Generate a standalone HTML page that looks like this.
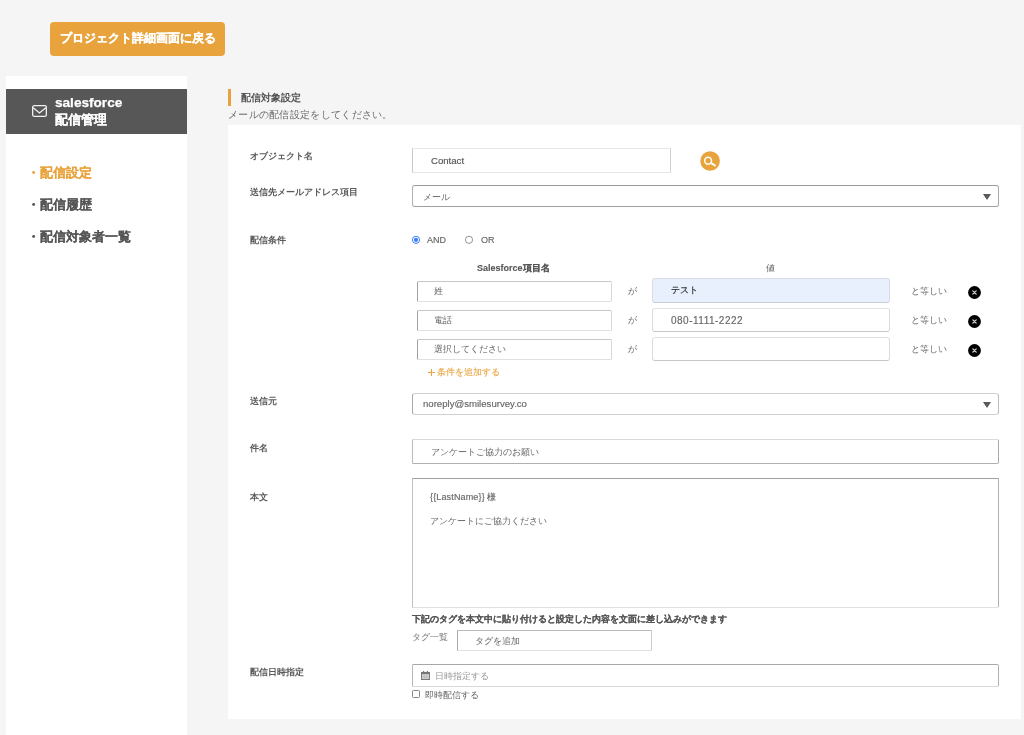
<!DOCTYPE html>
<html><head><meta charset="utf-8">
<style>
*{box-sizing:border-box;margin:0;padding:0}
html,body{width:1024px;height:735px;overflow:hidden;background:#f5f5f5;font-family:"Liberation Sans",sans-serif;color:#555;position:relative}
.a{position:absolute;white-space:nowrap;will-change:transform}
.btn{left:50px;top:22px;width:175px;height:34px;background:#e9a33c;border-radius:4px;color:#fff;font-weight:bold;font-size:12px;line-height:32px;text-align:center}
.side{left:6px;top:76px;width:181px;height:659px;background:#fff}
.shead{left:6px;top:89px;width:181px;height:45px;background:#575757}
.stitle{left:55px;top:95px;color:#fff;font-weight:bold;font-size:13.6px;line-height:16px}
.stitle2{left:55px;top:112px;color:#fff;font-weight:bold;font-size:13px;line-height:16px}
.nav{left:27px;font-size:12.6px;font-weight:bold;color:#555;line-height:16px;-webkit-text-stroke:0.1px currentColor}
.nav.on{color:#e9a33c}
.bar{left:228px;top:89px;width:3px;height:17px;background:#e9a33c}
.h1{left:241px;top:91px;font-size:10px;font-weight:bold;color:#555;line-height:14px}
.sub{left:228px;top:108px;font-size:10px;letter-spacing:0.3px;color:#6a6a6a;line-height:14px}
.panel{left:228px;top:125px;width:793px;height:594px;background:#fff}
.lbl{left:250px;font-size:9px;font-weight:bold;color:#5a5a5a;line-height:12px}
.inp{border:1px solid #ddd;border-top-color:#c8c8c8;border-radius:2px;background:#fff;font-size:9px;color:#666}
.sel{border:1px solid #a9a9a9;border-top-color:#999;border-radius:3px;background:#fff;font-size:9px;color:#555}
.txt{font-size:9px;color:#666;line-height:12px}
.tri{width:0;height:0;border-left:4px solid transparent;border-right:4px solid transparent;border-top:6.5px solid #595959}
.x{width:13px;height:13px;border-radius:50%;background:#000}
.btn,.stitle{-webkit-text-stroke:0.25px currentColor}
.stitle2{-webkit-text-stroke:0.1px currentColor}
.lt{-webkit-text-stroke:0.15px currentColor}
</style></head><body>
<div class="a btn">プロジェクト詳細画面に戻る</div>

<div class="a side"></div>
<div class="a shead"></div>
<svg class="a" style="left:32px;top:105px" width="15" height="12" viewBox="0 0 15 12"><rect x="0.65" y="0.65" width="13.7" height="10.7" rx="1.6" fill="none" stroke="#f0f0f0" stroke-width="1.3"/><path d="M1.2 2.7 L7.5 7.9 L13.8 2.7" fill="none" stroke="#f0f0f0" stroke-width="1.3"/></svg>
<div class="a stitle">salesforce</div>
<div class="a stitle2">配信管理</div>
<div class="a nav on" style="top:165px">・配信設定</div>
<div class="a nav" style="top:197px">・配信履歴</div>
<div class="a nav" style="top:229px">・配信対象者一覧</div>

<div class="a bar"></div>
<div class="a h1">配信対象設定</div>
<div class="a sub">メールの配信設定をしてください。</div>

<div class="a panel"></div>

<!-- object name -->
<div class="a lbl" style="top:150px">オブジェクト名</div>
<div class="a inp" style="left:412px;top:148px;width:259px;height:25px;border-color:#e6e6e6 #d0d0d0 #e6e6e6 #c8c8c8;border-radius:1px"></div>
<div class="a txt lt" style="left:431px;top:155px;color:#555;font-size:9.6px">Contact</div>
<svg class="a" style="left:700px;top:151px" width="21" height="21" viewBox="0 0 21 21"><circle cx="10.1" cy="10" r="9.8" fill="#e9a33c"/><circle cx="8.1" cy="9.7" r="3.4" fill="none" stroke="#fff" stroke-width="1.5"/><path d="M11.2 12.1 L15 14.5" stroke="#fff" stroke-width="2" stroke-linecap="round"/></svg>

<!-- email field -->
<div class="a lbl" style="top:186px">送信先メールアドレス項目</div>
<div class="a sel" style="left:412px;top:185px;width:587px;height:22px;border-color:#999 #a8a8a8 #a0a0a0 #b0b0b0"></div>
<div class="a txt" style="left:423px;top:191px">メール</div>
<div class="a tri" style="left:983px;top:194px"></div>

<!-- condition -->
<div class="a lbl" style="top:234px">配信条件</div>
<svg class="a" style="left:411px;top:235px" width="10" height="10" viewBox="0 0 10 10"><circle cx="5" cy="4.8" r="3.6" fill="#fff" stroke="#3d7bf5" stroke-width="1"/><circle cx="5" cy="4.8" r="2.1" fill="#3d7bf5"/></svg>
<div class="a txt lt" style="left:427px;top:234px">AND</div>
<svg class="a" style="left:464px;top:235px" width="10" height="10" viewBox="0 0 10 10"><circle cx="5" cy="4.8" r="3.6" fill="#fff" stroke="#777" stroke-width="0.8"/></svg>
<div class="a txt lt" style="left:481px;top:234px">OR</div>

<div class="a txt" style="left:477px;top:262px;font-weight:bold;color:#555;-webkit-text-stroke:0.1px #555">Salesforce項目名</div>
<div class="a txt" style="left:766px;top:262px;color:#555">値</div>

<div class="a inp" style="left:417px;top:281px;width:195px;height:21px;border-color:#c8c8c8 #d8d8d8 #e0e0e0 #a0a0a0;border-radius:1.5px"></div>
<div class="a txt" style="left:434px;top:285px">姓</div>
<div class="a txt" style="left:628px;top:285px">が</div>
<div class="a inp" style="left:652px;top:278px;width:238px;height:25px;background:#e8f0fe;border-radius:3px;border-color:#d8dde6 #d8dde6 #c8ccd4"></div>
<div class="a txt" style="left:671px;top:284px;color:#333;-webkit-text-stroke:0.2px #333">テスト</div>
<div class="a txt" style="left:911px;top:285px">と等しい</div>
<svg class="a" style="left:968px;top:286px" width="13" height="13" viewBox="0 0 13 13"><circle cx="6.5" cy="6.5" r="6.4" fill="#000"/><path d="M4.8 4.8 L8.2 8.2 M8.2 4.8 L4.8 8.2" stroke="#d8d8d8" stroke-width="1.2" stroke-linecap="round"/></svg>

<div class="a inp" style="left:417px;top:310px;width:195px;height:21px;border-color:#c8c8c8 #d8d8d8 #e0e0e0 #a0a0a0;border-radius:1.5px"></div>
<div class="a txt" style="left:434px;top:314px">電話</div>
<div class="a txt" style="left:628px;top:314px">が</div>
<div class="a inp" style="left:652px;top:308px;width:238px;height:24px;border-radius:3px;border-color:#e2e2e2 #dcdcdc #c8c8c8"></div>
<div class="a txt lt" style="left:671px;top:315px;font-size:10px;letter-spacing:0.5px">080-1111-2222</div>
<div class="a txt" style="left:911px;top:314px">と等しい</div>
<svg class="a" style="left:968px;top:315px" width="13" height="13" viewBox="0 0 13 13"><circle cx="6.5" cy="6.5" r="6.4" fill="#000"/><path d="M4.8 4.8 L8.2 8.2 M8.2 4.8 L4.8 8.2" stroke="#d8d8d8" stroke-width="1.2" stroke-linecap="round"/></svg>

<div class="a inp" style="left:417px;top:339px;width:195px;height:21px;border-color:#c8c8c8 #d8d8d8 #e0e0e0 #a0a0a0;border-radius:1.5px"></div>
<div class="a txt" style="left:434px;top:343px">選択してください</div>
<div class="a txt" style="left:628px;top:343px">が</div>
<div class="a inp" style="left:652px;top:337px;width:238px;height:24px;border-radius:3px;border-color:#e2e2e2 #dcdcdc #c8c8c8"></div>
<div class="a txt" style="left:911px;top:343px">と等しい</div>
<svg class="a" style="left:968px;top:344px" width="13" height="13" viewBox="0 0 13 13"><circle cx="6.5" cy="6.5" r="6.4" fill="#000"/><path d="M4.8 4.8 L8.2 8.2 M8.2 4.8 L4.8 8.2" stroke="#d8d8d8" stroke-width="1.2" stroke-linecap="round"/></svg>

<div class="a txt" style="left:437px;top:366px;color:#e9a33c;-webkit-text-stroke:0.1px #e9a33c">条件を追加する</div><div class="a" style="left:428px;top:371.6px;width:6.5px;height:1.1px;background:#e9a33c"></div><div class="a" style="left:430.7px;top:368.9px;width:1.1px;height:6.5px;background:#e9a33c"></div>

<!-- from -->
<div class="a lbl" style="top:395px">送信元</div>
<div class="a sel" style="left:412px;top:393px;width:587px;height:22px;border-color:#d0d0d0 #bbb #d0d0d0 #aaa"></div>
<div class="a txt lt" style="left:423px;top:398px;font-size:9.6px">noreply@smilesurvey.co</div>
<div class="a tri" style="left:983px;top:402px"></div>

<!-- subject -->
<div class="a lbl" style="top:442px">件名</div>
<div class="a inp" style="left:412px;top:439px;width:587px;height:25px;border-color:#dadada #aaa #b0b0b0 #bbb;border-radius:0 2px 2px 0"></div>
<div class="a txt" style="left:431px;top:446px">アンケートご協力のお願い</div>

<!-- body -->
<div class="a lbl" style="top:491px">本文</div>
<div class="a inp" style="left:412px;top:478px;width:587px;height:130px;border-color:#a0a0a0 #b0b0b0 #e0e0e0 #c0c0c0;border-radius:1px 1px 2px 1px"></div>
<div class="a txt lt" style="left:430px;top:491px;letter-spacing:0.15px">{{LastName}} 様</div>
<div class="a txt" style="left:430px;top:515px">アンケートにご協力ください</div>

<div class="a txt" style="left:412px;top:613px;font-weight:bold;color:#555;-webkit-text-stroke:0.1px #555">下記のタグを本文中に貼り付けると設定した内容を文面に差し込みができます</div>
<div class="a txt" style="left:412px;top:631px;color:#777">タグ一覧</div>
<div class="a inp" style="left:457px;top:630px;width:195px;height:21px;border-color:#bbb #ccc #e0e0e0 #a8a8a8;border-radius:1px"></div>
<div class="a txt" style="left:475px;top:635px">タグを追加</div>

<!-- date -->
<div class="a lbl" style="top:666px">配信日時指定</div>
<div class="a inp" style="left:412px;top:664px;width:587px;height:23px;border-color:#a8a8a8 #b0b0b0 #d8d8d8 #b8b8b8;border-radius:1px 2px 2px 1px"></div>
<svg class="a" style="left:421px;top:671px" width="9" height="9" viewBox="0 0 9 9"><rect x="0.5" y="1.5" width="8" height="7" fill="#e0e0e0" stroke="#777" stroke-width="1"/><rect x="0" y="1" width="9" height="2.2" fill="#777"/><path d="M3.2 3.5 V8.5 M5.8 3.5 V8.5 M0.5 5.2 H8.5 M0.5 6.9 H8.5" stroke="#aaa" stroke-width="0.6"/><rect x="2" y="0" width="1.2" height="2" fill="#777"/><rect x="5.8" y="0" width="1.2" height="2" fill="#777"/></svg>
<div class="a txt" style="left:435px;top:670px;color:#999">日時指定する</div>
<div class="a" style="left:412px;top:690px;width:8px;height:8px;border:1px solid #888;border-radius:1.5px;background:#fff"></div>
<div class="a txt" style="left:425px;top:689px">即時配信する</div>
</body></html>
